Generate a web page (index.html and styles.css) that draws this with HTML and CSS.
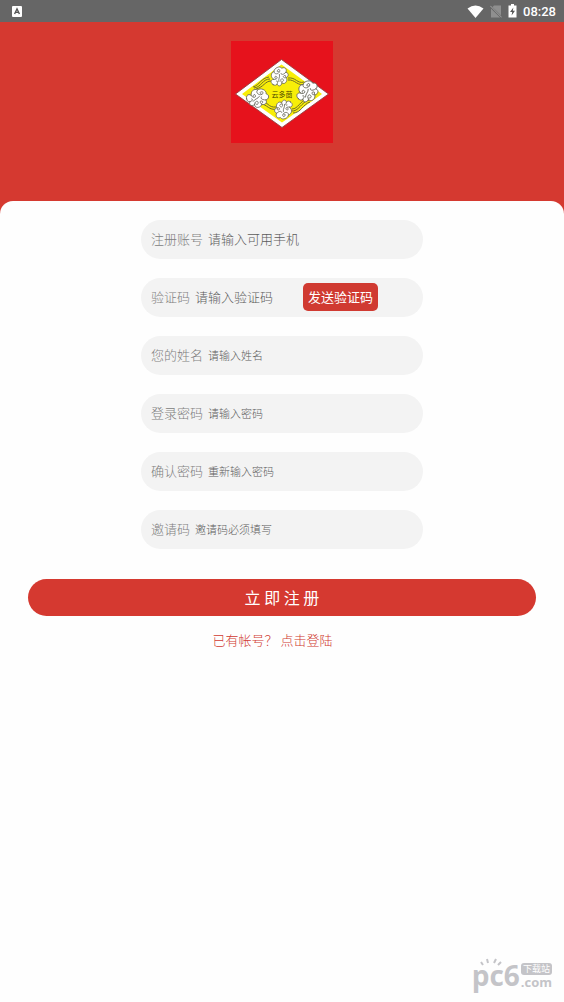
FILE: index.html
```
<!DOCTYPE html>
<html lang="zh-CN">
<head>
  <meta charset="UTF-8" />
  <meta name="viewport" content="width=device-width, initial-scale=1.0" />
  <title>注册</title>
  <link rel="stylesheet" href="styles.css">
</head>
<body>
  <div class="status-bar">
    <svg width="10" height="11" viewBox="0 0 10 11">
      <rect width="10" height="11" rx="1" fill="#fff"/>
      <path d="M2.6 8 L5 2.8 L7.4 8 M3.5 6.4 H6.5" fill="none" stroke="#555" stroke-width="1.4"/>
    </svg>
    <div class="status-icons">
      <svg width="17" height="13" viewBox="0 0 17 13">
        <path d="M0.5 3.6 Q8.5 -2.8 16.5 3.6 L8.5 13 Z" fill="#fff"/>
      </svg>
      <svg width="12" height="13" viewBox="0 0 12 13">
        <path d="M4 0.5 H11 V12.5 H1 V3.5 Z" fill="#8f8f8f"/>
        <path d="M0 1 L12 13" stroke="#666" stroke-width="2"/>
        <path d="M0.3 0.8 L11.7 12.4" stroke="#a5a5a5" stroke-width="1"/>
      </svg>
      <svg width="9" height="14" viewBox="0 0 9 14">
        <path d="M3 0 H6 V1.5 H8.5 V13.5 H0.5 V1.5 H3 Z" fill="#fff"/>
        <path d="M5.4 3.4 L2 8 H4.2 L3.6 11.6 L7 6.8 H4.8 Z" fill="#555"/>
      </svg>
      <span class="time">08:28</span>
    </div>
  </div>

  <header class="banner">
    <svg class="logo" width="102" height="102" viewBox="0 0 102 102" role="img" aria-label="云多茴">
      <defs>
        <g id="cloud" stroke="#66665a" stroke-width="0.8" stroke-linecap="round" stroke-linejoin="round">
          <path fill="#fff" d="M-10 3 C-12 -1 -8 -3 -6 -1 C-8 -5 -5 -9 -1 -8 C1 -11 8 -10 8 -6 C12 -6 12 -1 9 0 C12 3 8 6 6 5 C6 9 0 11 -1 7 C-4 10 -7 8 -6 5 C-8 6 -9 5 -10 3 Z"/>
          <path fill="none" d="M-6 -1 C-4 1 -1 0 -2 -2 C-3 -4 -5 -2 -4 -1 M-1 -8 C-3 -6 0 -3 3 -4 C6 -5 5 -8 3 -7 C1 -6 2 -5 3 -5 M9 0 C6 1 3 0 4 -2 M6 5 C4 5 3 2 5 2 C7 2 7 3 6 4 M-6 5 C-4 4 -3 2 -5 2 M-1 7 C-2 4 1 2 2 4 C3 6 1 7 0 6 M-3 4 C-2 1 1 1 2 -2"/>
        </g>
      </defs>
      <rect width="102" height="102" fill="#e6121c"/>
      <path d="M50.5 18.5 L97.5 53 L51 86.5 L4.5 53 Z" fill="#fff" stroke="#94403f" stroke-width="0.9"/>
      <path d="M50.5 23.5 L91 53 L51 81.5 L11 53 Z" fill="#f8ee08"/>
      <g fill="none" stroke="#706b28" stroke-width="1">
        <path d="M23 47 C31 46 31 38 39 38 M22 46 C29 44 30 37 38 36 M25 48 C33 46 34 40 40 40"/>
        <path d="M57 37 C65 36 66 43 73 41 M57 39 C64 38 67 46 74 43"/>
        <path d="M30 61 C37 60 37 67 45 66 M30 63 C36 63 38 70 46 68"/>
        <path d="M60 70 C68 71 70 61 78 59 M61 68 C67 68 69 60 76 58 M62 72 C70 72 72 63 79 61"/>
      </g>
      <use href="#cloud" transform="translate(48 36) rotate(-35) scale(0.92)"/>
      <use href="#cloud" transform="translate(26 57) rotate(12)"/>
      <use href="#cloud" transform="translate(53 68) rotate(150) scale(0.92)"/>
      <use href="#cloud" transform="translate(76 51) rotate(-20) scale(1.05)"/>
      <text class="logo-text" x="51" y="56" text-anchor="middle">云多茴</text>
    </svg>
  </header>

  <main class="card">
    <form>
      <div class="field">
        <label for="phone">注册账号</label>
        <input class="large" type="text" id="phone" placeholder="请输入可用手机" />
      </div>
      <div class="field">
        <label for="code">验证码</label>
        <input class="large code" type="text" id="code" placeholder="请输入验证码" />
        <button type="button" class="send-btn">发送验证码</button>
      </div>
      <div class="field">
        <label for="name">您的姓名</label>
        <input type="text" id="name" placeholder="请输入姓名" />
      </div>
      <div class="field">
        <label for="password">登录密码</label>
        <input type="password" id="password" placeholder="请输入密码" />
      </div>
      <div class="field">
        <label for="confirm">确认密码</label>
        <input type="password" id="confirm" placeholder="重新输入密码" />
      </div>
      <div class="field">
        <label for="invite">邀请码</label>
        <input type="text" id="invite" placeholder="邀请码必须填写" />
      </div>
      <button type="submit" class="submit-btn">立 即 注 册</button>
    </form>
    <p class="login"><a href="#login">已有帐号？ 点击登陆</a></p>
  </main>

  <div class="watermark">
    <svg class="rays" width="24" height="8" viewBox="0 0 24 8">
      <path d="M3 7 L1 4 M8 5 L7 1 M14 5 L16 1 M18 7 L21 4" stroke="#c4c4c8" stroke-width="2"/>
    </svg>
    <span class="mark">pc6</span>
    <span class="mark-side">
      <span class="mark-tag">下载站</span>
      <span class="mark-com">.com</span>
    </span>
  </div>
</body>
</html>
```
FILE: styles.css
```
* {
  box-sizing: border-box;
}

body {
  margin: 0;
  min-height: 100vh;
  background: #fefefe;
  font-family: 'Noto Sans CJK SC', sans-serif;
  font-size: 13px;
  font-weight: 300;
}

input,
button {
  font-family: inherit;
  font-weight: inherit;
  border: none;
  padding: 0;
}

.status-bar {
  display: flex;
  justify-content: space-between;
  align-items: center;
  height: 22px;
  padding: 0 8px 0 12px;
  background: #666;
  color: #fff;
}

.status-icons {
  display: flex;
  align-items: center;
  gap: 6px;
}

.time {
  font-family: Roboto, sans-serif;
  font-size: 13px;
  font-weight: 500;
}

.banner {
  display: flex;
  justify-content: center;
  height: 195px;
  padding-top: 19px;
  background: #d53930;
}

.logo-text {
  font-size: 7px;
  font-weight: 400;
  fill: #4a4500;
}

.card {
  position: relative;
  margin-top: -16px;
  padding-top: 19px;
  border-radius: 13px 13px 0 0;
  background: #fefefe;
}

.field {
  display: flex;
  align-items: center;
  width: 50%;
  height: 39px;
  margin: 0 auto 19px;
  padding: 0 10px 2px;
  border-radius: 20px;
  background: #f3f3f3;
}

.field label {
  flex: none;
  margin-right: 5px;
  color: #808080;
}

.field input {
  flex: 1;
  min-width: 0;
  background: transparent;
  color: #333;
  font-size: 11px;
  outline: none;
}

.field input.large {
  font-size: 13px;
}

.field input.code {
  flex: 0 1 108px;
}

.field input::placeholder {
  color: #5c5c5c;
}

.send-btn {
  flex: none;
  height: 28px;
  padding: 0 5px;
  border-radius: 5px;
  background: #d03a31;
  color: #fff;
  font-size: 13px;
  font-weight: 400;
  cursor: pointer;
}

.submit-btn {
  display: block;
  width: 90%;
  height: 37px;
  margin: 30px auto 0;
  padding-bottom: 2px;
  border-radius: 19px;
  background: #d53930;
  color: #fff;
  font-size: 16px;
  font-weight: 400;
  cursor: pointer;
}

.login {
  margin: 14px 0 0;
  padding-right: 19px;
  text-align: center;
  line-height: 20px;
}

.login a {
  color: #d03a31;
  text-decoration: none;
}

.watermark {
  position: absolute;
  right: 12px;
  bottom: 13px;
  display: flex;
  align-items: flex-end;
  gap: 1px;
  color: #c4c4c8;
  font-family: 'Open Sans', sans-serif;
  font-weight: 700;
}

.mark {
  font-size: 28px;
  line-height: 28px;
}

.rays {
  position: absolute;
  left: 8px;
  top: -3px;
}

.mark-side {
  display: flex;
  flex-direction: column;
}

.mark-tag {
  padding: 0 1px;
  border-radius: 3px;
  background: #c4c4c8;
  color: #fefefe;
  font-family: 'Noto Sans CJK SC', sans-serif;
  font-size: 9px;
  font-weight: 400;
  line-height: 12px;
  text-align: center;
}

.mark-com {
  font-size: 13px;
  line-height: 14px;
}
```
